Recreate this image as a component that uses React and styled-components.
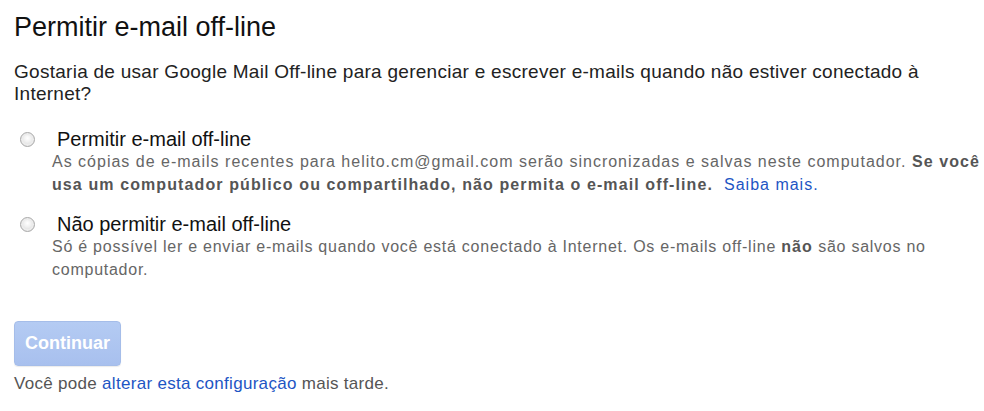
import React from "react";
import styled, { createGlobalStyle } from "styled-components";

const GlobalStyle = createGlobalStyle`
  html, body {
    margin: 0;
    padding: 0;
    background: #ffffff;
  }
  body {
    font-family: Arial, "Liberation Sans", sans-serif;
    color: #222222;
  }
`;

const Page = styled.div`
  padding: 11px 0 0 14px;
  width: 984px;
  box-sizing: border-box;
`;

const Title = styled.h1`
  margin: 0;
  font-size: 27px;
  font-weight: normal;
  line-height: 32px;
  color: #111111;
`;

const Question = styled.p`
  margin: 18px 0 0 0;
  width: 930px;
  font-size: 19px;
  line-height: 22px;
  letter-spacing: 0.27px;
  color: #222222;
`;

const Options = styled.div`
  display: flex;
  flex-direction: column;
  gap: 17px;
  margin-top: 23px;
`;

const Option = styled.label`
  display: grid;
  grid-template-columns: 38px 1fr;
  align-items: start;
`;

const Radio = styled.span`
  margin: 4px 0 0 6px;
  width: 15px;
  height: 15px;
  border-radius: 50%;
  box-sizing: border-box;
  border: 1px solid #a9a9a9;
  background: radial-gradient(circle at 50% 40%, #ffffff 0%, #f1f1f1 35%, #cfcfcf 100%);
  box-shadow: inset 0 0 0 2px #ececec;
`;

const OptionBody = styled.div`
  display: flex;
  flex-direction: column;
`;

const OptionLabel = styled.span`
  font-size: 20px;
  line-height: 22px;
  color: #111111;
  padding-left: 5px;
`;

const Description = styled.p`
  margin: 0;
  width: 934px;
  font-size: 16px;
  line-height: 23px;
  color: #666666;
  letter-spacing: ${(p) => p.$spacing || "1px"};
`;

const Strong = styled.strong`
  color: #555555;
  font-weight: bold;
  letter-spacing: 1.1px;
`;

const Link = styled.a`
  color: #1d55c4;
  text-decoration: none;
  margin-left: ${(p) => (p.$gap ? "11px" : "0")};
`;

const Button = styled.button`
  display: block;
  margin-top: 40px;
  width: 107px;
  height: 45px;
  border: 1px solid #a5bde9;
  border-radius: 4px;
  background: linear-gradient(#b4cbf3, #a8c0ee);
  color: #ffffff;
  font-family: Arial, "Liberation Sans", sans-serif;
  font-weight: bold;
  font-size: 18px;
  padding: 0;
  cursor: default;
  box-shadow: 0 1px 1px rgba(0, 0, 0, 0.08);
`;

const Footer = styled.p`
  margin: 7px 0 0 0;
  font-size: 17px;
  line-height: 22px;
  letter-spacing: 0.3px;
  color: #555555;
`;

const App = () => {
  return (
    <>
      <GlobalStyle />
      <Page>
        <Title>Permitir e-mail off-line</Title>
        <Question>
          Gostaria de usar Google Mail Off-line para gerenciar e escrever
          e-mails quando não estiver conectado à Internet?
        </Question>
        <Options>
          <Option>
            <Radio />
            <OptionBody>
              <OptionLabel>Permitir e-mail off-line</OptionLabel>
              <Description>
                As cópias de e-mails recentes para helito.cm@gmail.com serão
                sincronizadas e salvas neste computador.{" "}
                <Strong>
                  Se você usa um computador público ou compartilhado, não
                  permita o e-mail off-line.
                </Strong>
                <Link href="#" $gap>
                  Saiba mais.
                </Link>
              </Description>
            </OptionBody>
          </Option>
          <Option>
            <Radio />
            <OptionBody>
              <OptionLabel>Não permitir e-mail off-line</OptionLabel>
              <Description $spacing="0.75px">
                Só é possível ler e enviar e-mails quando você está conectado
                à Internet. Os e-mails off-line <Strong>não</Strong> são salvos
                no computador.
              </Description>
            </OptionBody>
          </Option>
        </Options>
        <Button>Continuar</Button>
        <Footer>
          Você pode <Link href="#">alterar esta configuração</Link> mais
          tarde.
        </Footer>
      </Page>
    </>
  );
};

export default App;
